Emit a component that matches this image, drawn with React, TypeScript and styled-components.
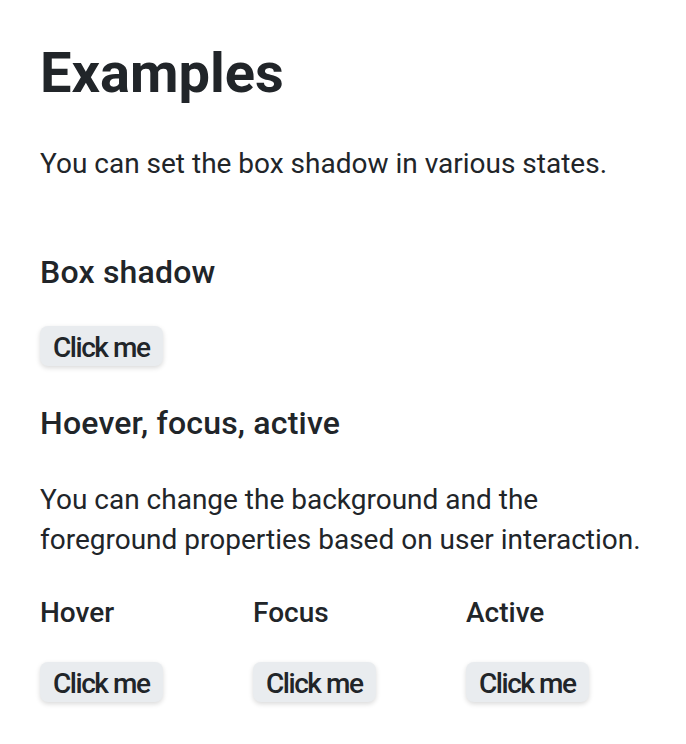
import React from "react";
import styled, { createGlobalStyle } from "styled-components";

const Global = createGlobalStyle`
  html, body { margin: 0; padding: 0; background: #ffffff; }
  body { font-family: Roboto, "Liberation Sans", sans-serif; color: #212529; }
`;

const Page = styled.main`
  display: flex;
  flex-direction: column;
  align-items: flex-start;
  padding: 40px;
`;

const Title = styled.h1`
  margin: 0;
  font-size: 56px;
  font-weight: 700;
  line-height: 1.2;
`;

const Text = styled.p<{ $top: number }>`
  margin: ${(p) => p.$top}px 0 0;
  font-size: 28px;
  line-height: 40px;
  font-weight: 400;
  max-width: 606px;
`;

const Heading = styled.h2<{ $top: number }>`
  margin: ${(p) => p.$top}px 0 0;
  font-size: 32px;
  font-weight: 500;
  letter-spacing: 0.2px;
  line-height: 1.2;
`;

const SubHeading = styled.h3`
  margin: 0;
  font-size: 28px;
  font-weight: 500;
  line-height: 1.2;
`;

const Button = styled.button<{ $top: number }>`
  margin: ${(p) => p.$top}px 0 0;
  height: 40px;
  padding: 4px 13px 0;
  border: none;
  border-radius: 8px;
  background: #e9ecef;
  color: #212529;
  font-family: Roboto, "Liberation Sans", sans-serif;
  font-size: 28px;
  font-weight: 500;
  letter-spacing: -1.45px;
  line-height: 36px;
  box-shadow: 0 2px 5px rgba(0, 0, 0, 0.15);
  cursor: pointer;
  &:hover { background: #dee2e6; }
  &:focus { outline: none; box-shadow: 0 0 0 3px rgba(13, 110, 253, 0.25); }
  &:active { background: #ced4da; }
`;

const Grid = styled.div`
  display: grid;
  grid-template-columns: repeat(3, 213px);
  margin-top: 36px;
`;

const Column = styled.div`
  display: flex;
  flex-direction: column;
  align-items: flex-start;
`;

export default function App() {
  const cols = ["Hover", "Focus", "Active"];
  return (
    <>
      <Global />
      <Page>
        <Title>Examples</Title>
        <Text $top={37}>You can set the box shadow in various states.</Text>
        <Heading $top={69}>Box shadow</Heading>
        <Button $top={34}>Click me</Button>
        <Heading $top={38}>Hoever, focus, active</Heading>
        <Text $top={38}>
          You can change the background and the foreground properties based on user interaction.
        </Text>
        <Grid>
          {cols.map((c) => (
            <Column key={c}>
              <SubHeading>{c}</SubHeading>
              <Button $top={32}>Click me</Button>
            </Column>
          ))}
        </Grid>
      </Page>
    </>
  );
}
